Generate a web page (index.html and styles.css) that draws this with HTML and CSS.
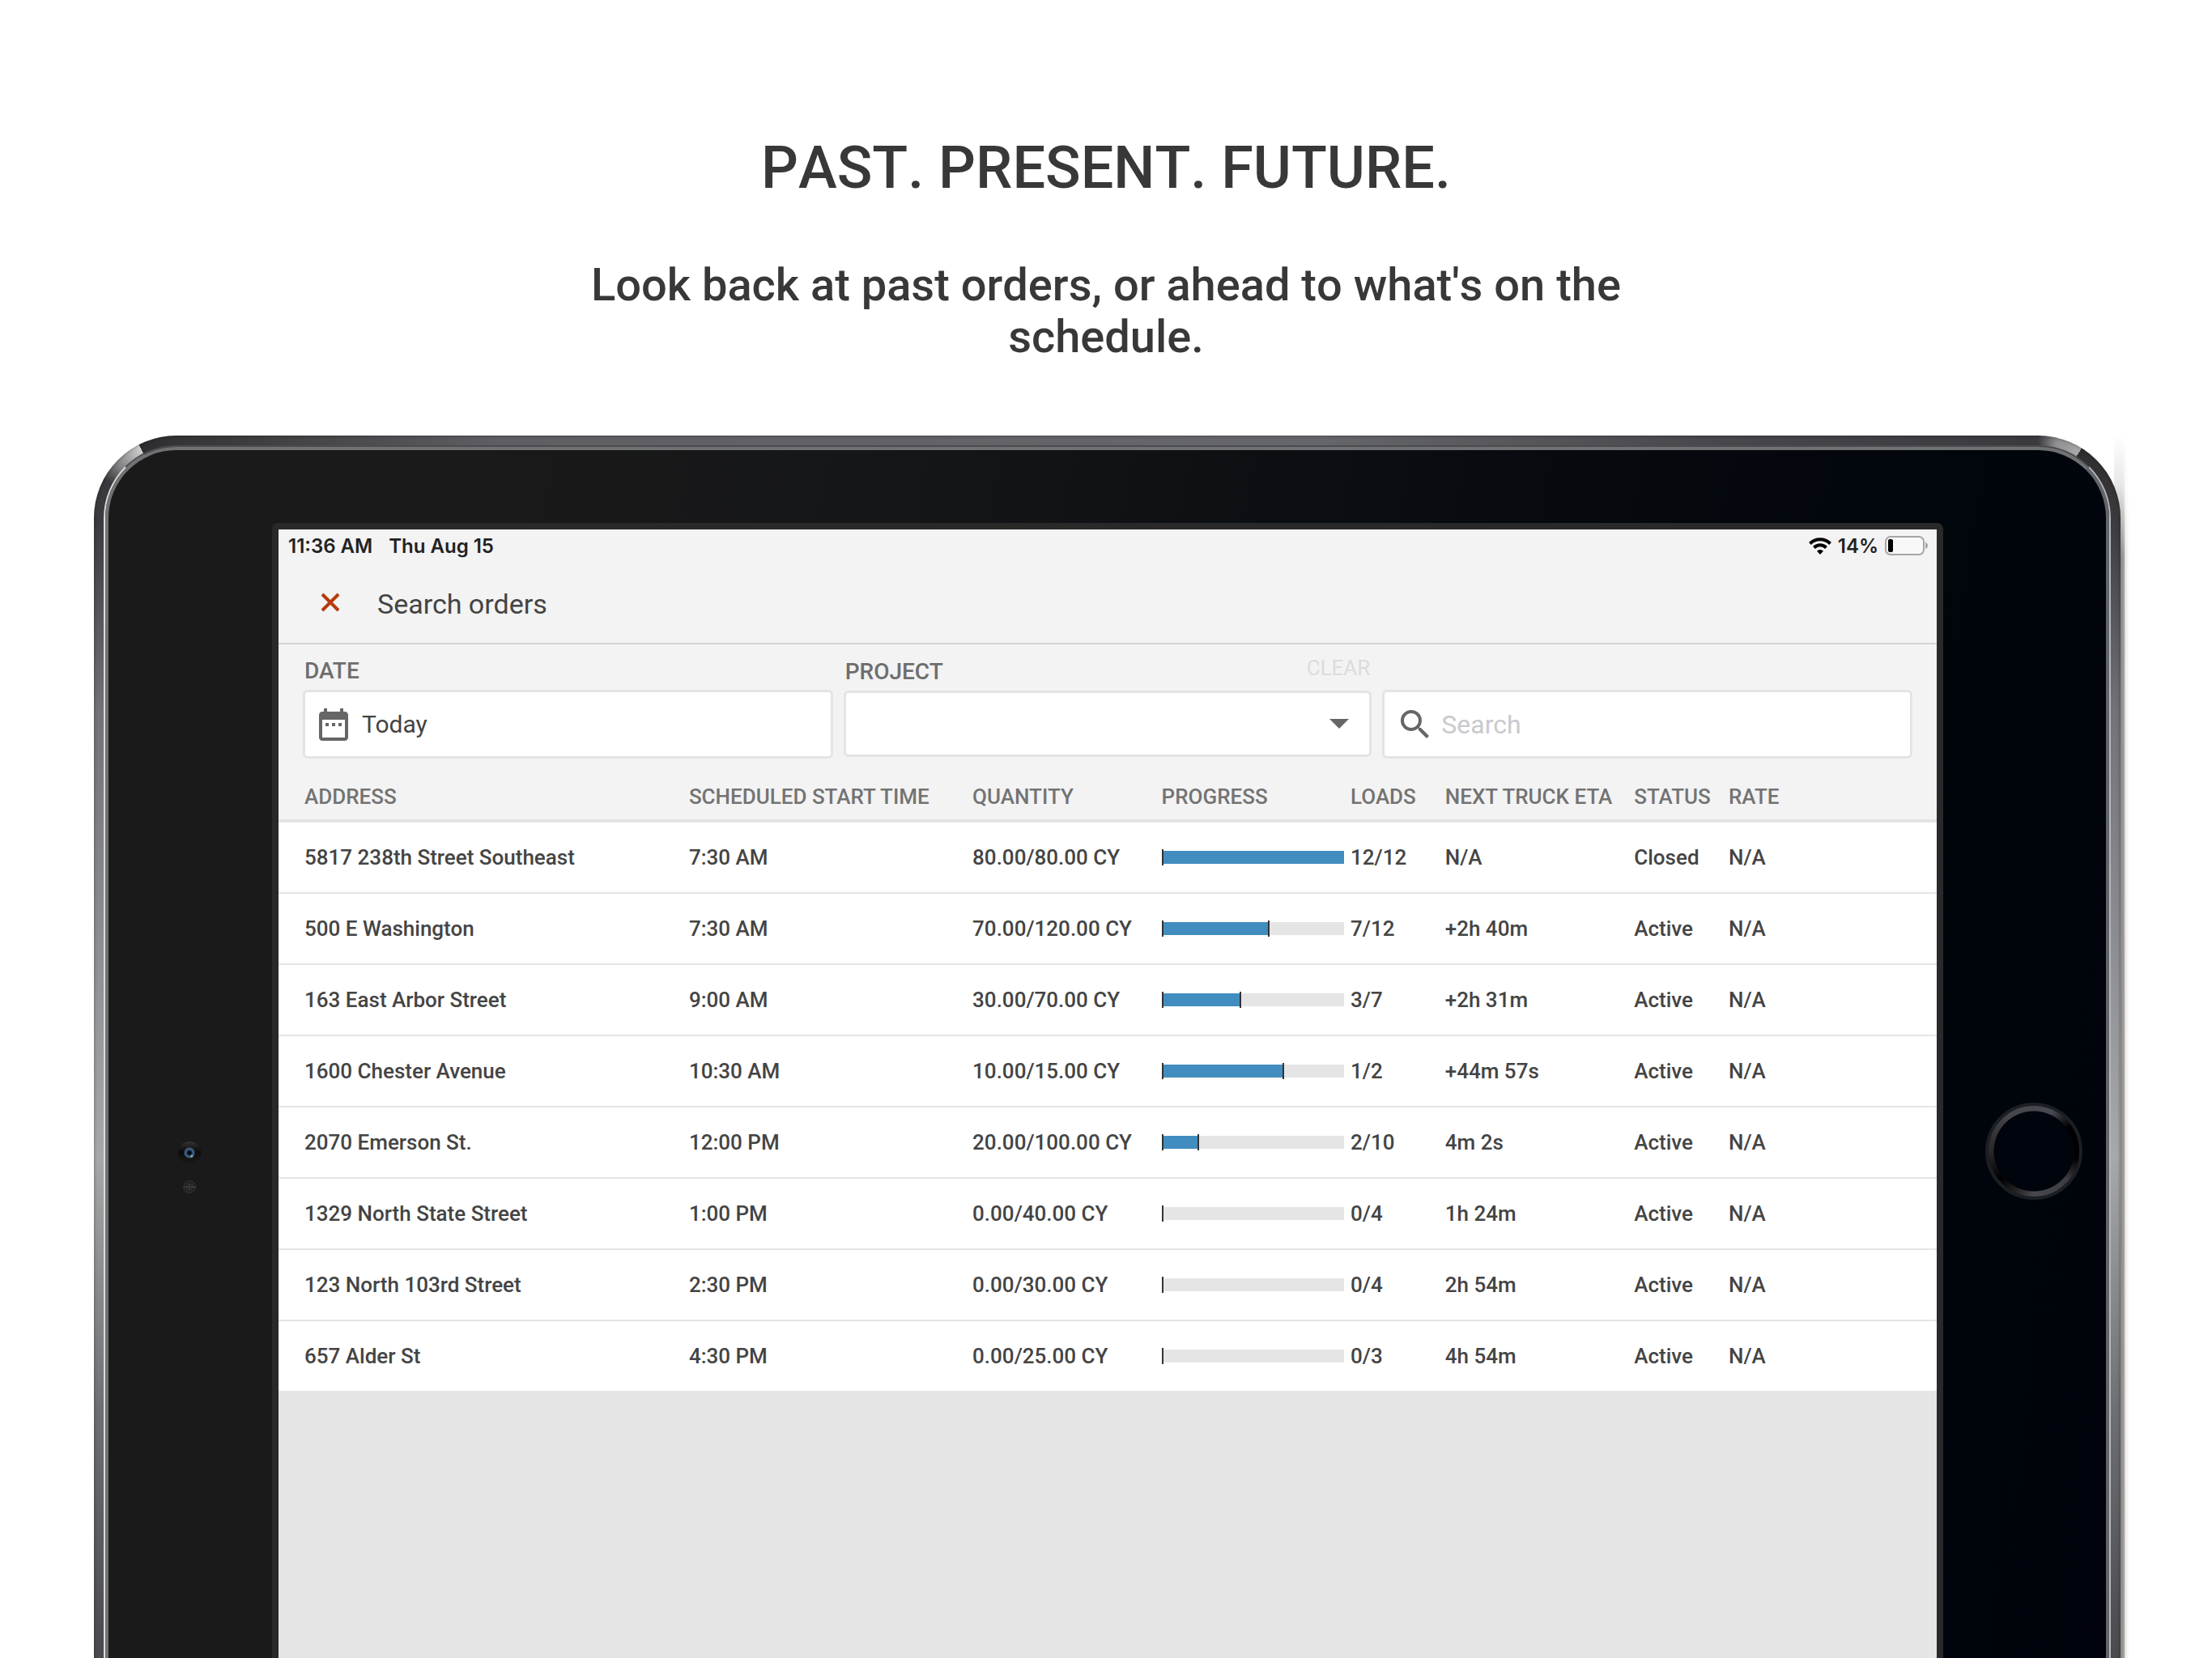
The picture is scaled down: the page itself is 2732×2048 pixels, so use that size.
FILE: index.html
```html
<!DOCTYPE html>
<html lang="en">
  <head>
    <meta charset="UTF-8" />
    <meta name="viewport" content="width=device-width, initial-scale=1.0" />
    <title>Search orders</title>
    <link rel="stylesheet" href="styles.css">
  </head>
  <body>
    <header class="intro">
      <h1 class="intro__heading">PAST. PRESENT. FUTURE.</h1>
      <p class="intro__text">
        Look back at past orders, or ahead to what's on the schedule.
      </p>
    </header>
    <div class="tablet">
      <div class="tablet__rim">
        <div class="tablet__bezel">
          <div class="tablet__side tablet__side--left">
            <span class="camera"></span>
            <svg class="sensor" viewBox="0 0 16 16" fill="none" stroke="#383838">
              <circle cx="8" cy="8" r="7" stroke-width="2" stroke-dasharray="2 1.5" />
              <circle cx="8" cy="8" r="4" stroke-width="2" stroke-dasharray="2 1" />
              <path stroke-width="2" d="M2 8h12M8 5v6" />
            </svg>
          </div>
          <main class="screen">
            <div class="status-bar">
              <span>11:36 AM</span>
              <span>Thu Aug 15</span>
              <span class="status-bar__right">
                <svg class="status-bar__wifi" viewBox="0 0 28 22" fill="none" stroke="#000" stroke-width="4">
                  <path d="M1.5 8.5a17.5 17.5 0 0 1 25 0" />
                  <path d="M6.5 13.5a10.5 10.5 0 0 1 15 0" />
                  <path fill="#000" stroke="none" d="M14 22l-4-4.3a5.7 5.7 0 0 1 8 0z" />
                </svg>
                <span>14%</span>
                <svg class="status-bar__battery" viewBox="0 0 54 24">
                  <rect x="1" y="1" width="47" height="22" rx="6" fill="#f8f8f8" stroke="#a6a6a6" stroke-width="2" />
                  <rect x="4" y="4" width="6" height="16" rx="2" />
                  <path fill="#a6a6a6" d="M50 8c4 1 4 7 0 8z" />
                </svg>
              </span>
            </div>
            <div class="title-bar">
              <button class="title-bar__close" aria-label="Close">
                <svg
                  class="title-bar__close-icon"
                  viewBox="0 0 24 24"
                  fill="none"
                  stroke="currentColor"
                  stroke-width="4"
                >
                  <path d="M2 2l20 20M22 2L2 22" />
                </svg>
              </button>
              <h2 class="title-bar__heading">Search orders</h2>
            </div>
            <form class="filters">
              <div class="field field--date">
                <div class="field__top">
                  <label class="field__label" for="date">DATE</label>
                </div>
                <div class="field__box">
                  <svg class="field__icon" viewBox="0 0 24 24" fill="currentColor">
                    <path
                      d="M9 11H7v2h2v-2zm4 0h-2v2h2v-2zm4 0h-2v2h2v-2zm2-7h-1V2h-2v2H8V2H6v2H5c-1.1 0-2 .9-2 2v14c0 1.1.9 2 2 2h14c1.1 0 2-.9 2-2V6c0-1.1-.9-2-2-2zm0 16H5V9h14v11z"
                    />
                  </svg>
                  <input class="field__input" id="date" type="text" value="Today" readonly />
                </div>
              </div>
              <div class="field field--project">
                <div class="field__top">
                  <label class="field__label" for="project">PROJECT</label>
                  <button class="field__clear" type="reset">CLEAR</button>
                </div>
                <div class="field__box">
                  <select class="field__input field__select" id="project">
                    <option></option>
                  </select>
                  <svg class="field__arrow" viewBox="0 0 24 12" fill="currentColor">
                    <path d="M0 0h24L12 12z" />
                  </svg>
                </div>
              </div>
              <div class="field">
                <div class="field__box">
                  <svg class="field__icon" viewBox="0 0 24 24" fill="currentColor">
                    <path
                      d="M15.5 14h-.79l-.28-.27A6.471 6.471 0 0 0 16 9.5 6.5 6.5 0 1 0 9.5 16c1.61 0 3.09-.59 4.23-1.57l.27.28v.79l5 4.99L20.49 19l-4.99-5zm-6 0C7.01 14 5 11.99 5 9.5S7.01 5 9.5 5 14 7.01 14 9.5 11.99 14 9.5 14z"
                    />
                  </svg>
                  <input class="field__input" type="search" placeholder="Search" aria-label="Search" />
                </div>
              </div>
            </form>
            <table class="orders">
              <colgroup>
                <col class="orders__address" />
                <col class="orders__start" />
                <col class="orders__quantity" />
                <col class="orders__progress" />
                <col class="orders__loads" />
                <col class="orders__eta" />
                <col class="orders__status" />
                <col />
              </colgroup>
              <thead>
                <tr>
                  <th>ADDRESS</th>
                  <th>SCHEDULED START TIME</th>
                  <th>QUANTITY</th>
                  <th>PROGRESS</th>
                  <th>LOADS</th>
                  <th>NEXT TRUCK ETA</th>
                  <th>STATUS</th>
                  <th>RATE</th>
                </tr>
              </thead>
              <tbody>
                <tr>
                  <td>5817 238th Street Southeast</td>
                  <td>7:30 AM</td>
                  <td>80.00/80.00 CY</td>
                  <td><div class="progress"><div class="progress__fill progress__fill--done" style="width: 100%"></div></div></td>
                  <td>12/12</td>
                  <td>N/A</td>
                  <td>Closed</td>
                  <td>N/A</td>
                </tr>
                <tr>
                  <td>500 E Washington</td>
                  <td>7:30 AM</td>
                  <td>70.00/120.00 CY</td>
                  <td><div class="progress"><div class="progress__fill" style="width: 59%"></div></div></td>
                  <td>7/12</td>
                  <td>+2h 40m</td>
                  <td>Active</td>
                  <td>N/A</td>
                </tr>
                <tr>
                  <td>163 East Arbor Street</td>
                  <td>9:00 AM</td>
                  <td>30.00/70.00 CY</td>
                  <td><div class="progress"><div class="progress__fill" style="width: 43%"></div></div></td>
                  <td>3/7</td>
                  <td>+2h 31m</td>
                  <td>Active</td>
                  <td>N/A</td>
                </tr>
                <tr>
                  <td>1600 Chester Avenue</td>
                  <td>10:30 AM</td>
                  <td>10.00/15.00 CY</td>
                  <td><div class="progress"><div class="progress__fill" style="width: 67%"></div></div></td>
                  <td>1/2</td>
                  <td>+44m 57s</td>
                  <td>Active</td>
                  <td>N/A</td>
                </tr>
                <tr>
                  <td>2070 Emerson St.</td>
                  <td>12:00 PM</td>
                  <td>20.00/100.00 CY</td>
                  <td><div class="progress"><div class="progress__fill" style="width: 20%"></div></div></td>
                  <td>2/10</td>
                  <td>4m 2s</td>
                  <td>Active</td>
                  <td>N/A</td>
                </tr>
                <tr>
                  <td>1329 North State Street</td>
                  <td>1:00 PM</td>
                  <td>0.00/40.00 CY</td>
                  <td><div class="progress"></div></td>
                  <td>0/4</td>
                  <td>1h 24m</td>
                  <td>Active</td>
                  <td>N/A</td>
                </tr>
                <tr>
                  <td>123 North 103rd Street</td>
                  <td>2:30 PM</td>
                  <td>0.00/30.00 CY</td>
                  <td><div class="progress"></div></td>
                  <td>0/4</td>
                  <td>2h 54m</td>
                  <td>Active</td>
                  <td>N/A</td>
                </tr>
                <tr>
                  <td>657 Alder St</td>
                  <td>4:30 PM</td>
                  <td>0.00/25.00 CY</td>
                  <td><div class="progress"></div></td>
                  <td>0/3</td>
                  <td>4h 54m</td>
                  <td>Active</td>
                  <td>N/A</td>
                </tr>
              </tbody>
            </table>
          </main>
          <div class="tablet__side tablet__side--right">
            <button class="home" aria-label="Home"></button>
          </div>
        </div>
      </div>
    </div>
  </body>
</html>
```

FILE: styles.css
```css
* {
  margin: 0;
  padding: 0;
  box-sizing: border-box;
}
body {
  display: flex;
  flex-direction: column;
  height: 100vh;
  overflow: hidden;
  font-family: "Roboto", sans-serif;
  font-weight: 500;
  color: #444;
  background-color: #fff;
}
button,
input,
select {
  font: inherit;
  color: inherit;
  border: none;
  background: none;
}
button {
  cursor: pointer;
}

/* Intro */
.intro {
  flex: none;
  display: flex;
  flex-direction: column;
  align-items: center;
  gap: 70px;
  padding: 166px 40px 90px;
  text-align: center;
  color: #383838;
  font-kerning: none;
}
.intro__heading {
  font-size: 72px;
  font-weight: 500;
  line-height: 84px;
}
.intro__text {
  max-width: 1366px;
  font-size: 56px;
  line-height: 64px;
}

/* Tablet */
.tablet {
  position: relative;
  flex: 1;
  display: flex;
  min-height: 0;
  margin: 0 113px 0 116px;
  padding: 12px 12px 0;
  border-radius: 102px 102px 0 0;
  background:
    conic-gradient(from 270deg at 102px 102px, #3c3c40 0deg, #38383c 28deg, #808082 42deg, #d0d0d0 63deg, #2c2c2e 63deg, #343436 90deg, #343436) left top / 102px 102px no-repeat,
    conic-gradient(at 0 102px, #3a3a3e 0deg, #909092 14deg, #a8a8aa 32deg, #2e2e30 32deg, #3a3a3c 90deg, #3a3a3c) right top / 102px 102px no-repeat,
    linear-gradient(to right, #343436 4%, #5e5e63 20%, #66676b 60%, #48484c 80%, #3a3a3e 96%) left top / 100% 14px no-repeat,
    linear-gradient(#3a3a3e 100px, #727277 340px, #a6a8aa 890px, #6e7073 1200px, #4a4a4e 1510px);
}
.tablet::before {
  content: "";
  position: absolute;
  z-index: -1;
  top: 0;
  right: -11px;
  bottom: 0;
  width: 19px;
  background: linear-gradient(to right, #8a8886 45%, #a8a6a4 68%, #e8e8e8 72%, #fff);
  -webkit-mask-image: linear-gradient(transparent, rgba(0, 0, 0, 0.2) 60px, #000 150px);
  mask-image: linear-gradient(transparent, rgba(0, 0, 0, 0.2) 60px, #000 150px);
}
.tablet::after {
  content: "";
  position: absolute;
  inset: 0 0 -20px;
  border-radius: inherit;
  box-shadow: inset 0 0 4px rgba(0, 0, 0, 0.4);
  pointer-events: none;
}
.tablet__rim {
  flex: 1;
  display: flex;
  border: 2px solid #4a4a50;
  border-right-color: #b6b6ba;
  border-bottom: none;
  border-left-color: #dcdcdc;
  border-radius: 90px 90px 0 0;
}
.tablet__bezel {
  flex: 1;
  display: grid;
  grid-template-columns: 202px 1fr 201px;
  border: 4px solid #6f7172;
  border-right-color: #62656a;
  border-bottom: none;
  border-radius: 88px 88px 0 0;
  background: linear-gradient(100deg, #1a1a1a 15%, #151618 35%, #080c10 62%, #01050c 85%, #00030b);
}
.tablet__side {
  display: flex;
  flex-direction: column;
  align-items: center;
}
.tablet__side--left {
  padding-top: 854px;
  padding-right: 2px;
  gap: 20px;
}
.tablet__side--right {
  padding-top: 806px;
  padding-left: 22px;
}
.camera {
  height: 28px;
  width: 28px;
  border-radius: 50%;
  background:
    radial-gradient(circle at 60% 65%, #8ba0ac 0 1px, transparent 2px),
    radial-gradient(circle, #05070c 0 2px, transparent 4px),
    radial-gradient(circle, #2b5f95 4px, #4a5562 6px, transparent 7px),
    linear-gradient(#333, #0c0c0c 45%, #1a1a1a);
}
.sensor {
  height: 16px;
  width: 16px;
}
.home {
  height: 120px;
  width: 120px;
  border: 4px solid #1a1f23;
  border-radius: 50%;
  background:
    radial-gradient(circle, #00040c 49px, transparent 50px),
    conic-gradient(#484850 25deg, #000 55deg, #000 100deg, #3c3c42 130deg, #484850 180deg, #222 205deg, #000 230deg, #29292b 270deg, #44444a 325deg, #484850);
}

/* Screen */
.screen {
  margin-top: 90px;
  border: 8px solid #292929;
  border-bottom: none;
  border-radius: 8px 8px 0 0;
  background-color: #e5e5e5;
  overflow: hidden;
}
.status-bar {
  display: flex;
  align-items: center;
  gap: 20px;
  height: 40px;
  padding: 0 10px 0 12px;
  font-family: "Inter", sans-serif;
  font-size: 24px;
  font-weight: 600;
  color: #222;
  background-color: #f3f3f3;
}
.status-bar__right {
  display: flex;
  align-items: center;
  gap: 8px;
  margin-left: auto;
}
.status-bar__wifi {
  height: 22px;
  width: 28px;
}
.status-bar__battery {
  height: 24px;
  width: 54px;
}
.title-bar {
  display: flex;
  align-items: center;
  gap: 34px;
  height: 102px;
  padding: 0 40px;
  border-bottom: 2px solid #d2d2d2;
  background-color: #f3f3f3;
}
.title-bar__close {
  display: grid;
  place-items: center;
  height: 48px;
  width: 48px;
  color: #b83a0c;
}
.title-bar__close-icon {
  height: 24px;
  width: 24px;
}
.title-bar__heading {
  padding-top: 4px;
  font-size: 34px;
  font-weight: 400;
}
.filters {
  display: grid;
  grid-template-columns: repeat(3, 1fr);
  align-items: end;
  gap: 12px;
  padding: 0 30px;
  background-color: #f3f3f3;
}
.field--project {
  padding: 0 1px 2px;
}
.field__top {
  display: flex;
  align-items: center;
  justify-content: space-between;
  height: 56px;
  padding: 8px 2px 0;
}
.field__label {
  font-size: 28px;
  color: #6e6e6e;
}
.field__clear {
  padding-bottom: 8px;
  font-size: 26px;
  font-weight: 400;
  color: #dcdcdc;
}
.field__box {
  position: relative;
  display: flex;
  align-items: center;
  gap: 8px;
  height: 85px;
  padding: 0 14px;
  border: 3px solid #e4e4e4;
  border-radius: 6px;
  background-color: #fff;
}
.field--date .field__box {
  padding: 0 11px;
}
.field--project .field__box {
  height: 82px;
}
.field__icon {
  flex: none;
  height: 48px;
  width: 48px;
  color: #666;
}
.field__input {
  flex: 1;
  min-width: 0;
  height: 100%;
  font-size: 32px;
  font-weight: 400;
  outline: none;
}
.field--date .field__input {
  padding-left: 3px;
  font-size: 30px;
}
.field__input::placeholder {
  color: #c9c9cf;
  opacity: 1;
}
.field__select {
  appearance: none;
}
.field__arrow {
  position: absolute;
  right: 25px;
  height: 12px;
  width: 24px;
  color: #666;
  pointer-events: none;
}

/* Orders */
.orders {
  width: 100%;
  table-layout: fixed;
  border-collapse: separate;
  border-spacing: 0;
  font-size: 26px;
  line-height: 30px;
  text-align: left;
  white-space: nowrap;
  background-color: #fff;
}
.orders__address {
  width: 24.75%;
}
.orders__start {
  width: 17.1%;
}
.orders__quantity,
.orders__progress,
.orders__eta {
  width: 11.4%;
}
.orders__loads,
.orders__status {
  width: 5.7%;
}
.orders th {
  height: 79px;
  padding-top: 18px;
  border-bottom: 4px solid #e4e4e4;
  font-weight: 500;
  color: #737373;
  background-color: #f3f3f3;
}
.orders td {
  height: 88px;
  border-bottom: 2px solid #e5e5e5;
}
.orders th:first-child,
.orders td:first-child {
  padding-left: 32px;
}
.progress {
  height: 20px;
  margin-right: 8px;
  border-left: 2px solid #333;
  background: linear-gradient(#e5e5e5, #e5e5e5) center / 100% 16px no-repeat;
}
.progress__fill {
  height: 20px;
  border-right: 2px solid #333;
  background: linear-gradient(#418dc0, #418dc0) center / 100% 16px no-repeat;
}
.progress__fill--done {
  border-right: none;
}
```
